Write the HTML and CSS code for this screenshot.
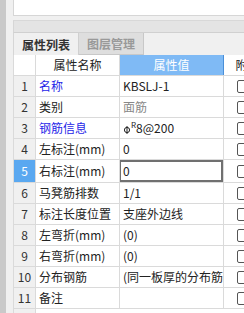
FILE: index.html
```html
<!DOCTYPE html>
<html>
<head>
<meta charset="utf-8">
<link rel="stylesheet" href="styles.css">
</head>
<body>
<div class="app">
  <div class="side"><div class="grip"></div><div class="gutter"></div></div>
  <div class="main">
    <div class="top-panel"></div>
    <div class="gap"></div>
    <div class="titlebar"></div>
    <div class="tabs">
      <div class="tab active">属性列表</div>
      <div class="tab">图层管理</div>
    </div>
    <table class="grid">
      <colgroup><col class="c-num"><col class="c-name"><col class="c-val"><col class="c-att"></colgroup>
      <tr class="head"><th class="num"></th><th>属性名称</th><th class="hv">属性值</th><th class="ha">附加</th></tr>
      <tr><td class="num">1</td><td class="blue">名称</td><td>KBSLJ-1</td><td class="att"><span class="cb"></span></td></tr>
      <tr><td class="num">2</td><td>类别</td><td class="gray">面筋</td><td class="att"><span class="cb"></span></td></tr>
      <tr><td class="num">3</td><td class="blue">钢筋信息</td><td><svg class="rebar" width="8" height="9" viewBox="0 0 8 9"><circle cx="4" cy="5" r="2.6" fill="none" stroke="#222" stroke-width="1"/><line x1="4" y1="1" x2="4" y2="9" stroke="#222" stroke-width="1"/></svg><sup class="sup">R</sup>8@200</td><td class="att"><span class="cb"></span></td></tr>
      <tr><td class="num">4</td><td>左标注(mm)</td><td>0</td><td class="att"><span class="cb"></span></td></tr>
      <tr class="sel"><td class="num">5</td><td>右标注(mm)</td><td class="edit"><div class="editbox">0</div></td><td class="att"><span class="cb"></span></td></tr>
      <tr><td class="num">6</td><td>马凳筋排数</td><td>1/1</td><td class="att"><span class="cb"></span></td></tr>
      <tr><td class="num">7</td><td>标注长度位置</td><td>支座外边线</td><td class="att"><span class="cb"></span></td></tr>
      <tr><td class="num">8</td><td>左弯折(mm)</td><td>(0)</td><td class="att"><span class="cb"></span></td></tr>
      <tr><td class="num">9</td><td>右弯折(mm)</td><td>(0)</td><td class="att"><span class="cb"></span></td></tr>
      <tr><td class="num">10</td><td>分布钢筋</td><td class="clip">(同一板厚的分布筋相同)</td><td class="att"><span class="cb"></span></td></tr>
      <tr><td class="num">11</td><td>备注</td><td></td><td class="att"><span class="cb"></span></td></tr>
      <tr class="foot"><td class="num"></td><td colspan="3"><span class="cb small"></span><span class="foot-text">显示属性</span></td></tr>
    </table>
  </div>
</div>
</body>
</html>
```

FILE: styles.css
```css
html, body {
  margin: 0;
  padding: 0;
  background: #f0f0f0;
  font-family: "Noto Sans CJK SC", "Microsoft YaHei", sans-serif;
  font-size: 12px;
  color: #222;
  overflow: hidden;
}
.app {
  display: flex;
  width: 244px;
  height: 313px;
  overflow: hidden;
}
.side {
  display: flex;
  flex: 0 0 13px;
}
.grip {
  width: 6px;
  background: #c9c9c9;
}
.gutter {
  width: 7px;
  background: #f0f0f0;
}
.main {
  flex: 1 1 auto;
  min-width: 0;
  display: flex;
  flex-direction: column;
  overflow: hidden;
}
.top-panel {
  height: 15px;
  background: #fff;
  border-left: 1px solid #d6d6d6;
  border-bottom: 1px solid #d6d6d6;
  flex: 0 0 auto;
}
.gap {
  height: 4px;
  flex: 0 0 auto;
}
.titlebar {
  height: 11px;
  background: #e4e4e4;
  border-top: 1px solid #d8d8d8;
  border-bottom: 1px solid #d0d0d0;
  border-left: 1px solid #d6d6d6;
  flex: 0 0 auto;
}
.tabs {
  display: flex;
  height: 22px;
  flex: 0 0 auto;
  border-left: 1px solid #d6d6d6;
  background: #f0f0f0;
}
.tab {
  width: 64px;
  display: flex;
  align-items: center;
  justify-content: center;
  font-weight: bold;
  font-size: 12px;
  color: #999;
  background: #dedede;
  border-right: 1px solid #c8c8c8;
  border-bottom: 1px solid #c8c8c8;
}
.tab.active {
  color: #333;
  background: #f0f0f0;
  border-right: 1px solid #d0d0d0;
  border-bottom: none;
}
.grid {
  border-collapse: collapse;
  table-layout: fixed;
  width: 258px;
  background: #fff;
  border-left: 1px solid #d6d6d6;
}
.c-num { width: 22px; }
.c-name { width: 84px; }
.c-val { width: 104px; }
.c-att { width: 48px; }
.grid th, .grid td {
  height: 20px;
  padding: 0 0 0 3px;
  border: 1px solid #dadada;
  white-space: nowrap;
  overflow: hidden;
  font-weight: normal;
  text-align: left;
  line-height: 20px;
}
.grid tr:first-child th { border-top: none; }
.grid .head th {
  text-align: center;
  padding: 0;
  background: #fff;
  height: 20px;
}
.grid .head th.hv {
  background: #7fbaf5;
  color: #fff;
  border-right: 1px solid #4a8fd8;
}
.grid .head th.ha {
  text-align: center;
  padding: 0;
}
.grid td.num {
  background: #f0f0f0;
  text-align: center;
  padding: 0;
  color: #333;
}
.grid th.num {
  background: #fff;
  padding: 0;
}
.grid .sel td.num {
  background: #5aa8f0;
  color: #fff;
}
.blue { color: #1f1fe8; }
.gray { color: #888; }
.grid td.edit {
  padding: 0;
}
.editbox {
  height: 18px;
  line-height: 18px;
  padding-left: 2px;
  border: 2px solid #707070;
  border-left-width: 1px;
}
.rebar {
  vertical-align: -1px;
}
.sup {
  font-size: 8px;
  vertical-align: 5px;
  line-height: 0;
}
.grid td.att {
  padding-left: 13px;
}
.cb {
  display: inline-block;
  width: 11px;
  height: 11px;
  border: 1px solid #555;
  border-radius: 2px;
  background: #fff;
  vertical-align: -2px;
}
.foot td {
  border-bottom: none;
}
.foot .cb.small {
  border-color: #777;
  margin-left: 1px;
}
.foot-text {
  margin-left: 6px;
  color: #555;
}
.clip {
  text-overflow: clip;
}
```
